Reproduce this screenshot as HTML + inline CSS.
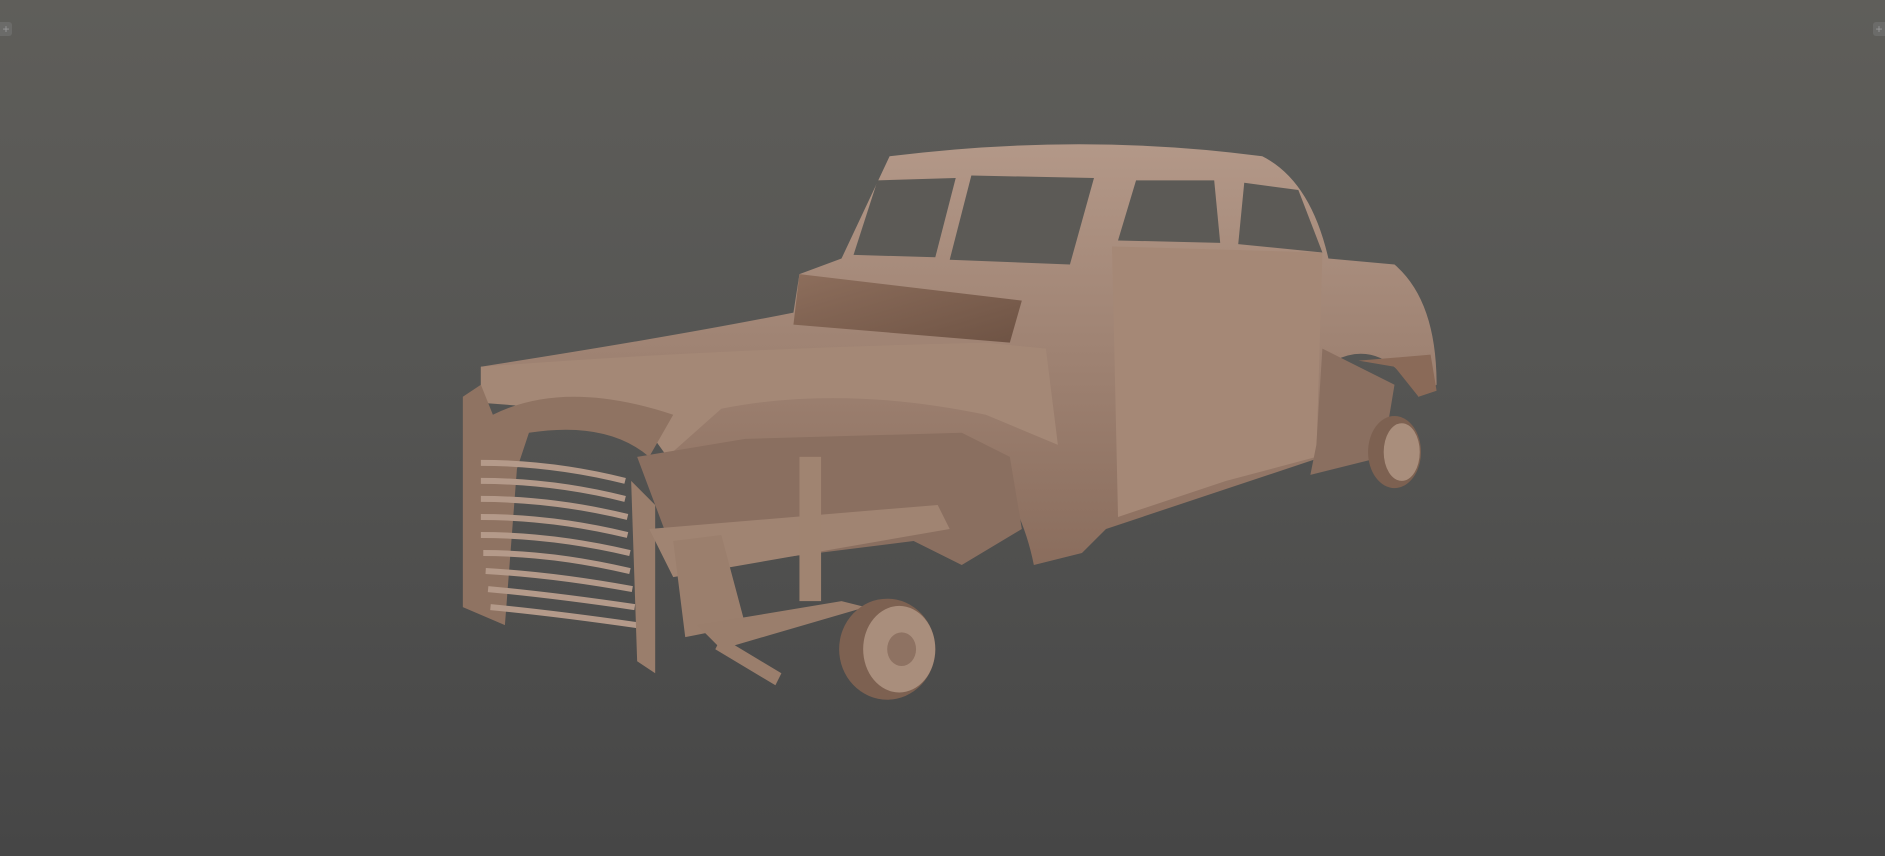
<!DOCTYPE html>
<html><head><style>
html,body{margin:0;padding:0;width:1885px;height:856px;overflow:hidden}
body{background:linear-gradient(#5f5e5a 0%,#555553 45%,#464646 100%);position:relative}
.b{position:absolute;width:12px;height:14px;background:#6b6b69;border-radius:3px;color:#999;font:12px "Liberation Sans",sans-serif;line-height:14px;text-align:center}
</style></head><body>
<div class="b" style="left:0;top:22px;border-radius:0 3px 3px 0">+</div>
<div class="b" style="right:0;top:22px;border-radius:3px 0 0 3px">+</div>
<svg width="1885" height="856" viewBox="0 0 1568 712" style="position:absolute;left:0;top:0">
<defs>
<linearGradient id="g" x1="0" y1="0" x2="0" y2="1"><stop offset="0" stop-color="#b39888"/><stop offset="1" stop-color="#8a6d5d"/></linearGradient>
<linearGradient id="d" x1="0" y1="0" x2="1" y2="1"><stop offset="0" stop-color="#8d6e5c"/><stop offset="1" stop-color="#6e5344"/></linearGradient>
</defs>
<!-- roof and cabin -->
<path d="M700 215 L740 130 Q900 110 1050 130 Q1090 150 1105 215 L1160 220 Q1195 250 1195 320 L1180 330 Q1150 280 1110 300 L1100 380 L920 440 L900 460 L860 470 Q850 420 820 385 L560 385 L540 360 L520 340 L400 335 L400 305 Q560 280 660 260 L665 228 Z" fill="url(#g)"/>
<!-- windows -->
<path d="M710 212 L730 150 L795 148 L778 214 Z" fill="#5c5a56"/>
<path d="M790 216 L808 146 L910 148 L890 220 Z" fill="#5c5a56"/>
<path d="M930 200 L945 150 L1010 150 L1015 202 Z" fill="#5c5a56"/>
<path d="M1030 203 L1035 152 L1080 158 L1100 210 Z" fill="#5c5a56"/>
<!-- interior -->
<path d="M925 205 L1100 210 L1095 380 L1020 400 L930 430 Z" fill="#a58876"/>
<path d="M665 228 L850 250 L840 285 L660 270 Z" fill="url(#d)"/>
<!-- hood/bed -->
<path d="M400 305 Q600 290 820 285 L870 290 L880 370 L820 345 Q700 320 600 340 L555 380 L530 345 L400 335 Z" fill="#a48876"/>
<!-- front fender -->
<path d="M385 330 L400 320 L410 345 Q470 315 560 345 L540 380 Q505 350 440 360 L430 390 L420 520 L385 505 Z" fill="#8f7362"/>
<!-- grille -->
<g stroke="#b49a8a" stroke-width="5" fill="none">
<path d="M400 385 Q460 385 520 400"/><path d="M400 400 Q460 400 520 415"/><path d="M400 415 Q460 415 522 430"/><path d="M400 430 Q460 430 522 445"/><path d="M400 445 Q460 445 524 460"/><path d="M402 460 Q460 460 524 475"/><path d="M404 475 Q460 478 526 490"/><path d="M406 490 Q460 495 528 505"/><path d="M408 505 Q460 510 530 520"/>
</g>
<path d="M525 400 L545 420 L545 560 L530 550 Z" fill="#9a7e6c"/>
<!-- engine/chassis -->
<path d="M530 380 L620 365 L800 360 L840 380 L850 440 L800 470 L760 450 L600 470 L560 460 Z" fill="#8a6f60"/>
<path d="M540 440 L780 420 L790 440 L560 480 Z" fill="#a08472"/>
<path d="M560 450 L600 445 L620 520 L570 530 Z" fill="#9b7f6d"/>
<rect x="665" y="380" width="18" height="120" fill="#a08471"/>
<path d="M580 520 L700 500 L720 505 L600 540 Z" fill="#9a7e6c"/>
<path d="M600 530 L650 560 L645 570 L595 540 Z" fill="#9a7e6c"/>
<!-- front wheel -->
<ellipse cx="738" cy="540" rx="40" ry="42" fill="#7d6151"/>
<ellipse cx="748" cy="540" rx="30" ry="36" fill="#a98e7c"/>
<ellipse cx="750" cy="540" rx="12" ry="14" fill="#8e7262"/>
<!-- rear suspension -->
<path d="M1100 290 L1160 320 L1150 380 L1090 395 L1095 370 Z" fill="#8a6f60"/>
<ellipse cx="1160" cy="376" rx="22" ry="30" fill="#7d6151"/>
<ellipse cx="1166" cy="376" rx="15" ry="24" fill="#a98e7c"/>
<path d="M1130 300 L1190 295 L1195 325 L1180 330 L1160 305 Z" fill="#8a6a58"/>
</svg>
</body></html>
